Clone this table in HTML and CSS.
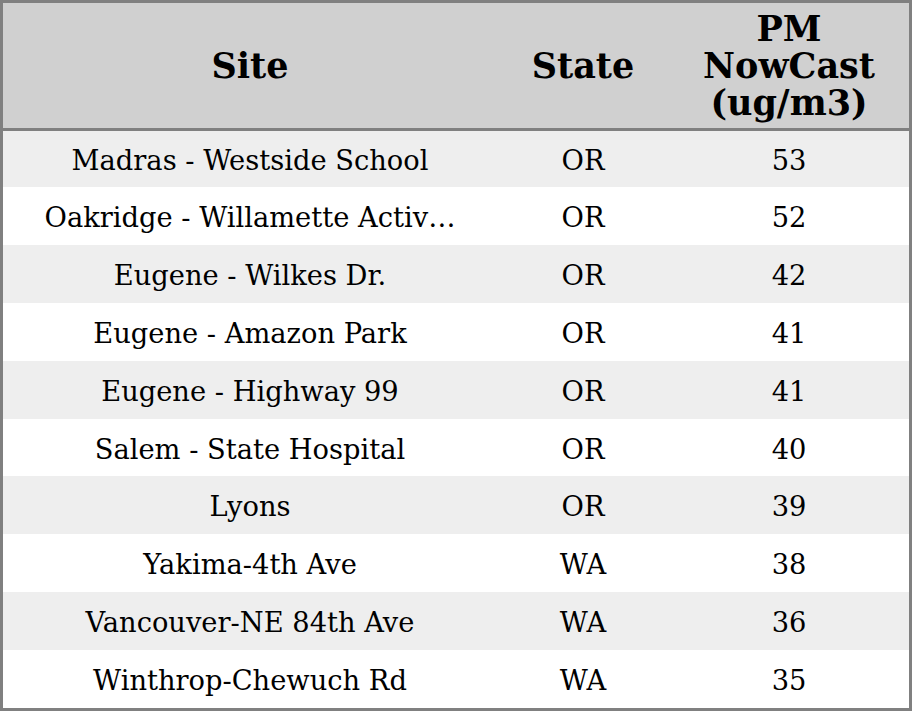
FILE: index.html
```html
<!DOCTYPE html>
<html>
<head>
<meta charset="utf-8">
<link rel="stylesheet" href="styles.css">
</head>
<body>
<div class="table">
  <div class="row head">
    <div class="cell"><span class="txt">Site</span></div>
    <div class="cell"><span class="txt">State</span></div>
    <div class="cell"><span class="txt">PM<br>NowCast<br>(ug/m3)</span></div>
  </div>
  <div class="row alt first">
    <div class="cell site"><span class="txt">Madras - Westside School</span></div>
    <div class="cell"><span class="txt">OR</span></div>
    <div class="cell"><span class="txt">53</span></div>
  </div>
  <div class="row">
    <div class="cell site" title="Oakridge - Willamette Activity Center"><span class="txt">Oakridge - Willamette Activ…</span></div>
    <div class="cell"><span class="txt">OR</span></div>
    <div class="cell"><span class="txt">52</span></div>
  </div>
  <div class="row alt">
    <div class="cell site"><span class="txt">Eugene - Wilkes Dr.</span></div>
    <div class="cell"><span class="txt">OR</span></div>
    <div class="cell"><span class="txt">42</span></div>
  </div>
  <div class="row">
    <div class="cell site"><span class="txt">Eugene - Amazon Park</span></div>
    <div class="cell"><span class="txt">OR</span></div>
    <div class="cell"><span class="txt">41</span></div>
  </div>
  <div class="row alt">
    <div class="cell site"><span class="txt">Eugene - Highway 99</span></div>
    <div class="cell"><span class="txt">OR</span></div>
    <div class="cell"><span class="txt">41</span></div>
  </div>
  <div class="row">
    <div class="cell site"><span class="txt">Salem - State Hospital</span></div>
    <div class="cell"><span class="txt">OR</span></div>
    <div class="cell"><span class="txt">40</span></div>
  </div>
  <div class="row alt">
    <div class="cell site"><span class="txt">Lyons</span></div>
    <div class="cell"><span class="txt">OR</span></div>
    <div class="cell"><span class="txt">39</span></div>
  </div>
  <div class="row">
    <div class="cell site"><span class="txt">Yakima-4th Ave</span></div>
    <div class="cell"><span class="txt">WA</span></div>
    <div class="cell"><span class="txt">38</span></div>
  </div>
  <div class="row alt">
    <div class="cell site"><span class="txt">Vancouver-NE 84th Ave</span></div>
    <div class="cell"><span class="txt">WA</span></div>
    <div class="cell"><span class="txt">36</span></div>
  </div>
  <div class="row">
    <div class="cell site"><span class="txt">Winthrop-Chewuch Rd</span></div>
    <div class="cell"><span class="txt">WA</span></div>
    <div class="cell"><span class="txt">35</span></div>
  </div>
</div>
</body>
</html>
```
FILE: styles.css
```css
html, body {
  margin: 0;
  padding: 0;
  background: #ffffff;
}
.table {
  box-sizing: border-box;
  width: 912px;
  height: 711px;
  border: 3px solid #808080;
  display: flex;
  flex-direction: column;
  font-family: "DejaVu Serif", serif;
  color: #000;
  font-size: 27.3px;
}
.row {
  display: grid;
  grid-template-columns: 494px 172px 1fr;
  flex: 1 1 0;
  min-height: 0;
  background: #ffffff;
}
.row.alt {
  background: #eeeeee;
}
.row.first {
  flex: 0 0 56px;
}
.row.head {
  flex: 0 0 128px;
  box-sizing: border-box;
  background: #d0d0d0;
  border-bottom: 3px solid #808080;
  font-weight: bold;
  font-size: 35px;
  line-height: 37.3px;
}
.cell {
  display: flex;
  align-items: center;
  min-width: 0;
  text-align: center;
  box-sizing: border-box;
}
.row:not(.head) .cell {
  padding-top: 3px;
}
.txt {
  display: block;
  width: 100%;
  white-space: nowrap;
}
```
